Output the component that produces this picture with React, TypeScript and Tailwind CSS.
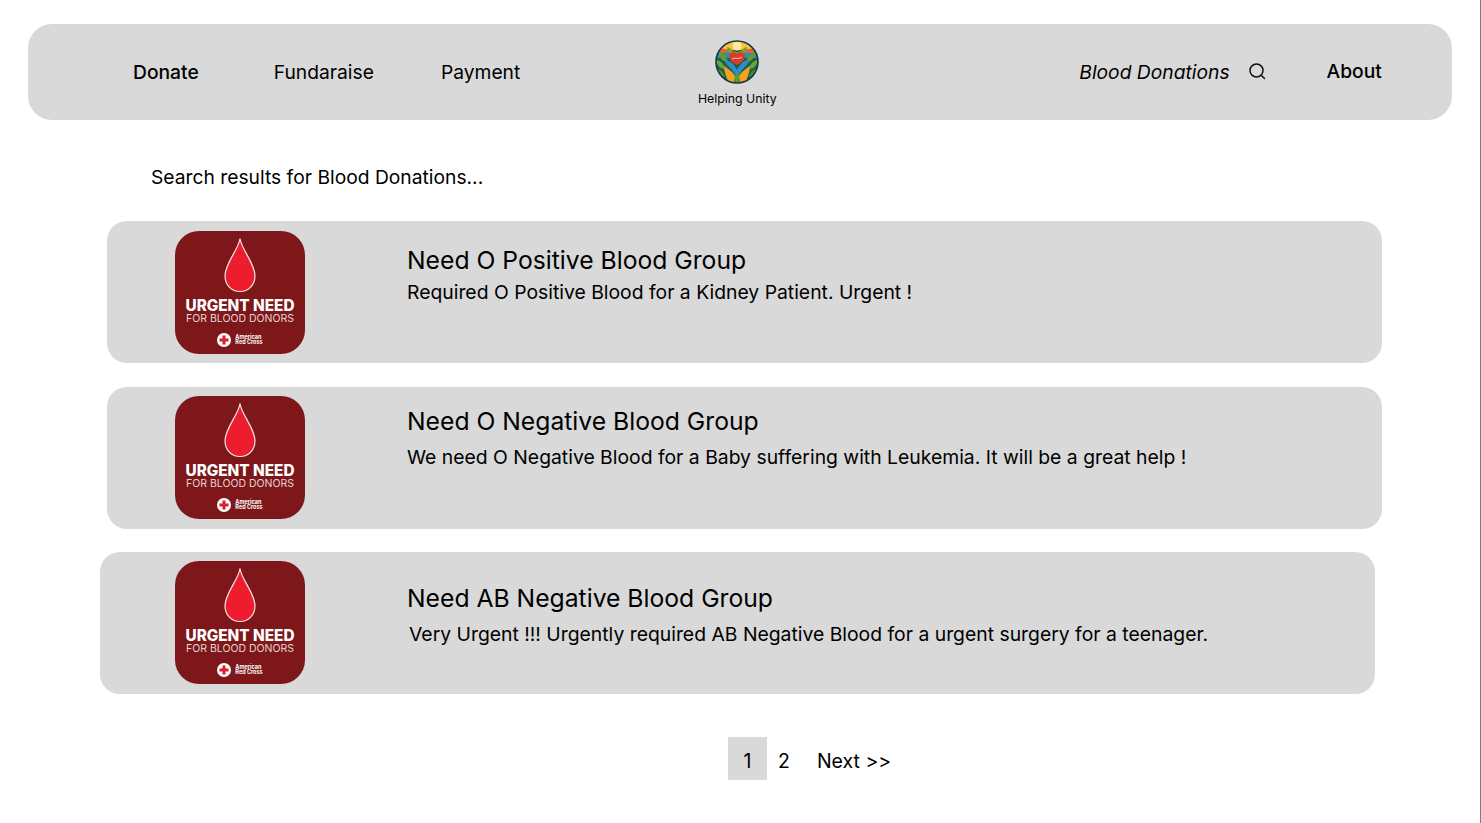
const Poster = () => (
  <div className="flex h-[123px] w-[130px] shrink-0 flex-col items-center rounded-[24px] bg-[#7d1719] text-white">
    <svg viewBox="0 0 34 56" className="mt-[6px] h-[56px] w-[34px]">
      <path
        d="M17 1.500C18 12 32 26 32 39C32 48 25.500 54.500 17 54.500C8.500 54.500 2 48 2 39C2 26 16 12 17 1.500Z"
        fill="#ee1c2f"
        stroke="#f6e4e4"
        strokeWidth="1.200"
      />
    </svg>
    <div className="mt-[6px] text-[15.300px] leading-[14px] font-extrabold whitespace-nowrap">URGENT NEED</div>
    <div className="text-[10.500px] leading-[11px] font-normal whitespace-nowrap text-[#e6d3d3]">FOR BLOOD DONORS</div>
    <div className="mt-[9px] flex items-center gap-[4px]">
      <svg viewBox="0 0 14 14" className="h-[14px] w-[14px]">
        <circle cx="7" cy="7" r="7" fill="#ffffff" />
        <path d="M5.500 2.500H8.500V5.500H11.500V8.500H8.500V11.500H5.500V8.500H2.500V5.500H5.500Z" fill="#d8202c" />
      </svg>
      <div className="text-[5.500px] leading-[5px] font-bold">
        American
        <br />
        Red Cross
      </div>
    </div>
  </div>
);

const Logo = () => (
  <svg viewBox="0 0 44 44" className="h-[44px] w-[44px]">
    <defs>
      <clipPath id="logoClip">
        <circle cx="22" cy="22" r="21" />
      </clipPath>
    </defs>
    <g clipPath="url(#logoClip)">
      <rect width="44" height="44" fill="#1f5f4a" />
      <rect y="0" width="44" height="10" fill="#f6c244" />
      <path d="M0 8C8 8 14 10 22 12C30 10 36 8 44 8V15H0Z" fill="#e2632b" />
      <path d="M0 13H44V18H0Z" fill="#2a8fb0" />
      <circle cx="22" cy="6" r="4.500" fill="#fdeb95" />
      <path d="M3 12C8 13 12 17 13 22C8 22 4 18 3 12Z" fill="#5c9e31" />
      <path d="M41 12C36 13 32 17 31 22C36 22 40 18 41 12Z" fill="#5c9e31" />
      <path d="M1 20C5 20 9 24 10 29C5 29 2 25 1 20Z" fill="#6aa836" />
      <path d="M43 20C39 20 35 24 34 29C39 29 42 25 43 20Z" fill="#6aa836" />
      <path d="M2 29C6 29 9 33 10 37C6 37 3 34 2 29Z" fill="#4b8b2b" />
      <path d="M42 29C38 29 35 33 34 37C38 37 41 34 42 29Z" fill="#4b8b2b" />
      <path d="M12 7C16 8 19 11 18.500 15C15 15 12 11 12 7Z" fill="#6aa836" />
      <path d="M32 7C28 8 25 11 25.500 15C29 15 32 11 32 7Z" fill="#6aa836" />
      <path d="M10 21C14 19 19 24 22 30C25 24 30 19 34 21C33 25 27 28 24 35H20C17 28 11 25 10 21Z" fill="#2c8fc9" />
      <path d="M22 25C16 22 13.500 19 14.500 15C15.500 11.500 20 11.500 22 14.500C24 11.500 28.500 11.500 29.500 15C30.500 19 28 22 22 25Z" fill="#dc3a26" />
      <path d="M17 19C20 17 23 20 27 17" fill="none" stroke="#f4d9c0" strokeWidth="1" />
      <path d="M9 26C12 28 17 31 20 36L19 44H14C12 38 9 32 9 26Z" fill="#f5a21f" />
      <path d="M35 26C32 28 27 31 24 36L25 44H30C32 38 35 32 35 26Z" fill="#f5a21f" />
      <path d="M22 33C25 36 25 40 22 44C19 40 19 36 22 33Z" fill="#5c9e31" />
    </g>
    <circle cx="22" cy="22" r="21" fill="none" stroke="#15384a" strokeWidth="1.600" />
  </svg>
);

const SearchIcon = () => (
  <svg viewBox="0 0 18 18" className="h-[18px] w-[18px]" fill="none" stroke="#111111" strokeWidth="1.500" strokeLinecap="round">
    <circle cx="8.500" cy="8.500" r="6.500" />
    <path d="M13.500 13.500L16.500 16.500" />
  </svg>
);

const results = [
  { title: "Need O Positive Blood Group", text: "Required O Positive Blood for a Kidney Patient. Urgent !", box: "ml-[107px] pl-[68px] pt-[10px]", head: "mt-[14px]", body: "mt-[5px]" },
  { title: "Need O Negative Blood Group", text: "We need O Negative Blood for a Baby suffering with Leukemia. It will be a great help !", box: "ml-[107px] mt-[24px] pl-[68px] pt-[9px]", head: "mt-[10px]", body: "mt-[9px]" },
  { title: "Need AB Negative Blood Group", text: "Very Urgent !!! Urgently required AB Negative Blood for a urgent surgery for a teenager.", box: "ml-[100px] mt-[23px] pl-[75px] pt-[9px]", head: "mt-[22px]", body: "mt-[9px] pl-[2px]" },
];

export default function App() {
  return (
    <div className="h-[823px] w-[1481px] overflow-hidden border-r border-[#808080] bg-white pt-[24px] font-['Inter',sans-serif] text-black">
      <nav className="ml-[28px] flex h-[96px] w-[1424px] items-start rounded-[24px] bg-[#d9d9d9] text-[19.250px] leading-[24px]">
        <a className="mt-[36px] ml-[105px] font-medium">Donate</a>
        <a className="mt-[36px] ml-[75px]">Fundaraise</a>
        <a className="mt-[36px] ml-[67px]">Payment</a>
        <div className="ml-[177px] flex w-[80px] flex-col items-center pt-[16px]">
          <Logo />
          <span className="mt-[6px] text-[12.300px] leading-[18px] whitespace-nowrap">Helping Unity</span>
        </div>
        <span className="mt-[36px] ml-[302px] italic">Blood Donations</span>
        <span className="mt-[38px] ml-[18px]">
          <SearchIcon />
        </span>
        <a className="mt-[35px] ml-[61px] font-medium">About</a>
      </nav>

      <p className="mt-[45px] ml-[151px] text-[19.250px] leading-[24px]">Search results for Blood Donations...</p>

      <section className="mt-[32px]">
        {results.map((r) => (
          <article key={r.title} className={`flex h-[142px] w-[1275px] rounded-[20px] bg-[#d9d9d9] ${r.box}`}>
            <Poster />
            <div className="ml-[102px] min-w-0">
              <h2 className={`text-[24.700px] leading-[30px] font-normal ${r.head}`}>{r.title}</h2>
              <p className={`text-[19.350px] leading-[24px] ${r.body}`}>{r.text}</p>
            </div>
          </article>
        ))}
      </section>

      <div className="mt-[43px] ml-[728px] flex items-center text-[19.500px] leading-[24px]">
        <span className="flex h-[43px] w-[39px] items-center justify-center bg-[#d9d9d9] pt-[4px]">1</span>
        <span className="ml-[11px] pt-[4px]">2</span>
        <span className="ml-[27px] pt-[4px]">Next &gt;&gt;</span>
      </div>
    </div>
  );
}
